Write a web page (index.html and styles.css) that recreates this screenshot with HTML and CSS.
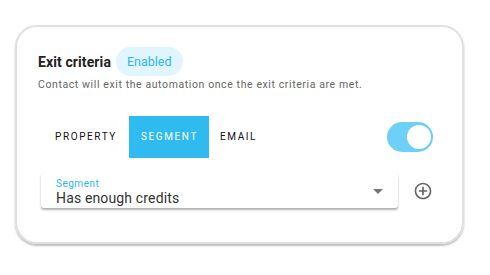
FILE: index.html
```html
<!DOCTYPE html>
<html>
<head>
<meta charset="utf-8">
<link rel="stylesheet" href="styles.css">
</head>
<body>
<div class="card">
  <div class="head">
    <span class="title">Exit criteria</span>
    <span class="chip">Enabled</span>
  </div>
  <div class="desc">Contact will exit the automation once the exit criteria are met.</div>
  <div class="tabsrow">
    <div class="tabs">
      <div class="tab">PROPERTY</div>
      <div class="tab active">SEGMENT</div>
      <div class="tab">EMAIL</div>
    </div>
    <div class="toggle"><div class="thumb"></div></div>
  </div>
  <div class="selrow">
    <div class="select">
      <div class="label">Segment</div>
      <div class="value">Has enough credits</div>
      <svg class="arrow" width="10" height="5" viewBox="0 0 10 5"><path d="M0 0 L10 0 L5 5 Z" fill="#757575"/></svg>
    </div>
    <svg class="plus" width="20" height="20" viewBox="0 0 24 24"><path fill="#666" d="M13 7h-2v4H7v2h4v4h2v-4h4v-2h-4V7zm-1-5C6.48 2 2 6.48 2 12s4.48 10 10 10 10-4.48 10-10S17.52 2 12 2zm0 18c-4.41 0-8-3.59-8-8s3.59-8 8-8 8 3.59 8 8-3.59 8-8 8z"/></svg>
  </div>
</div>
</body>
</html>
```
FILE: styles.css
```css
html, body { margin: 0; padding: 0; background: #fff; }
body { font-family: Roboto, "Liberation Sans", sans-serif; width: 490px; height: 275px; }
.card {
  margin: 25px 0 0 15px;
  width: 449px;
  height: 219px;
  border: 2px solid #e0e0e0;
  border-radius: 22px;
  box-sizing: border-box;
  box-shadow: 0 2px 2px rgba(0,0,0,0.25);
  padding: 20px 0 0 21px;
}
.head { display: flex; align-items: center; height: 29px; }
.title { font-size: 14px; font-weight: 700; color: #222; letter-spacing: 0.1px; }
.chip {
  margin-left: 5px;
  background: #e1f5fe;
  color: #29b6f6;
  font-size: 12.5px;
  height: 29px;
  line-height: 29px;
  padding: 0 11px;
  border-radius: 15px;
}
.desc { font-size: 10.5px; line-height: 13px; color: #666; letter-spacing: 0.6px; margin-top: 2px; }
.tabsrow { display: flex; align-items: center; justify-content: space-between; margin-top: 25px; width: 395px; }
.tabs { display: flex; }
.tab {
  height: 42px; line-height: 42px;
  font-size: 10px; letter-spacing: 1.6px; color: #111;
  padding: 0 12px 0 17px;
}
.tab.active { background: #2fbaf0; color: #fff; padding: 0 12px; width: 56px; text-align: center; }
.tab:last-child { padding-left: 11px; }
.toggle {
  position: relative;
  width: 46px; height: 30px; border-radius: 15px; background: #6ed0f6;
}
.thumb { position: absolute; right: 2px; top: 3px; width: 24px; height: 24px; border-radius: 50%; background: #fff; }
.selrow { display: flex; align-items: center; margin-top: 15px; margin-left: 3px; }
.select {
  position: relative;
  width: 357px; height: 35px; box-sizing: border-box;
  background: #fff;
  border-radius: 3px;
  box-shadow: 0 2px 2px rgba(0,0,0,0.3), 0 0 1px rgba(0,0,0,0.08);
  padding: 5px 0 0 15px;
}
.label { font-size: 10px; color: #29b6f6; letter-spacing: 0.5px; line-height: 12px; }
.value { font-size: 14px; color: #333; line-height: 16px; letter-spacing: 0.15px; }
.arrow { position: absolute; right: 15px; top: 16px; }
.plus { margin-left: 15px; }
```
